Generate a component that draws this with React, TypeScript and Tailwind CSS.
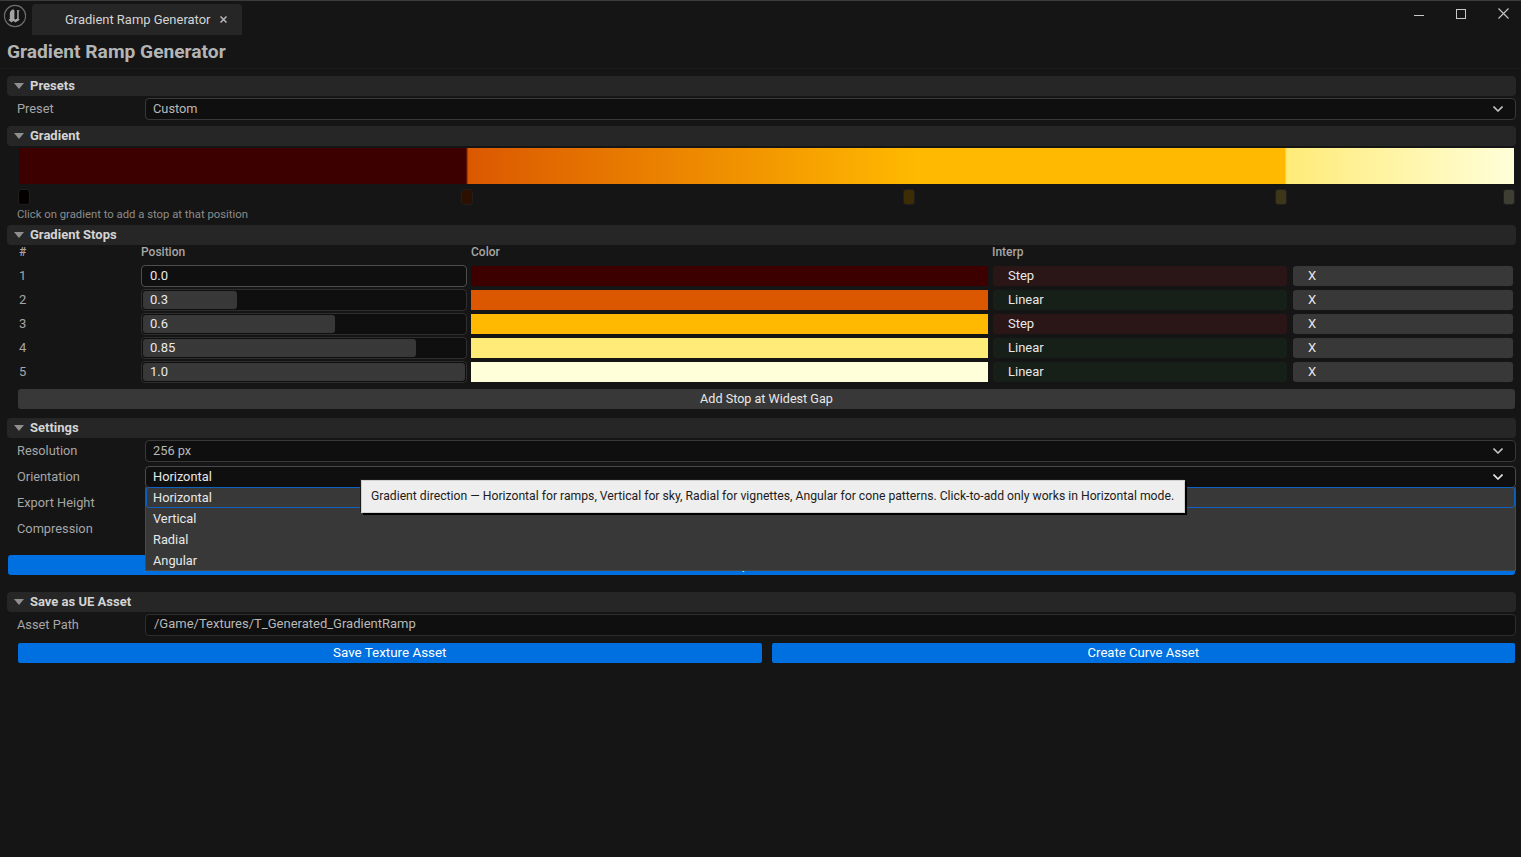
const stops = [
  { n: "1", pos: "0.0", fill: 0, color: "bg-[#3d0000]", interp: "Step" },
  { n: "2", pos: "0.3", fill: 0.292, color: "bg-[#db5800]", interp: "Linear" },
  { n: "3", pos: "0.6", fill: 0.596, color: "bg-[#ffb900]", interp: "Step" },
  { n: "4", pos: "0.85", fill: 0.848, color: "bg-[#ffeb78]", interp: "Linear" },
  { n: "5", pos: "1.0", fill: 1, color: "bg-[#ffffd9]", interp: "Linear" },
];

function Section({ title }: { title: string }) {
  return (
    <div className="ml-[7px] mr-[5px] flex h-5 items-center rounded-[4px] bg-[#262626] pl-[7px]">
      <svg width="10" height="6" viewBox="0 0 10 6" className="mr-[6px]">
        <polygon points="0,0 10,0 5,6" fill="#8f8f8f" />
      </svg>
      <span className="text-[13px] font-bold text-[#d4d4d4]">{title}</span>
    </div>
  );
}

function Chevron({ color = "#c0c0c0" }: { color?: string }) {
  return (
    <svg width="10" height="6" viewBox="0 0 10 6" fill="none" stroke={color} strokeWidth="1.6">
      <polyline points="0.5,0.5 5,5 9.5,0.5" />
    </svg>
  );
}

function SelectRow({ label, value, active }: { label: string; value?: string; active?: boolean }) {
  return (
    <div className="flex h-[22px] items-center pl-[17px] pr-[5px]">
      <span className="w-[128px] shrink-0 text-[12.8px] text-[#a6a6a6]">{label}</span>
      <div
        className={`flex h-[22px] flex-1 items-center justify-between rounded-[4px] border bg-[#0f0f0f] pl-[7px] pr-[12px] ${
          active ? "border-[#4a4a4a]" : "border-[#383838]"
        }`}
      >
        <span className={`text-[12.8px] ${active ? "text-[#e8e8e8]" : "text-[#b8b8b8]"}`}>{value}</span>
        <Chevron color={active ? "#e8e8e8" : "#c0c0c0"} />
      </div>
    </div>
  );
}

function StopRow({ stop }: { stop: (typeof stops)[number] }) {
  const step = stop.interp === "Step";
  return (
    <div className="flex h-[22px] items-center pl-[19px] pr-2">
      <span className="w-[122px] shrink-0 text-[13px] text-[#a6a6a6]">{stop.n}</span>
      <div
        className={`relative flex h-[22px] w-[326px] shrink-0 items-center rounded-[4px] border bg-[#0f0f0f] ${
          stop.n === "1" ? "border-[#4d4d4d]" : "border-[#2e2e2e]"
        }`}
      >
        <div
          className="absolute bottom-px left-px top-px rounded-[3px] bg-[#383838]"
          style={{ width: `${stop.fill * 322}px` }}
        />
        <span className="relative pl-2 text-[13px] text-[#e8e8e8]">{stop.pos}</span>
      </div>
      <div className={`ml-1 h-5 w-[517px] shrink-0 ${stop.color}`} />
      <div
        className={`ml-[5px] flex h-5 w-[294px] shrink-0 items-center rounded-[3px] pl-[15px] text-[13px] text-[#e8e8e8] ${
          step ? "bg-[#2a1616]" : "bg-[#161f18]"
        }`}
      >
        {stop.interp}
      </div>
      <div className="ml-[6px] flex h-5 w-[220px] shrink-0 items-center rounded-[3px] bg-[#383838] pl-[15px] text-[13px] text-[#e8e8e8]">
        X
      </div>
    </div>
  );
}

const handles = [
  { left: "ml-[18px]", color: "bg-[#050000]" },
  { left: "ml-[431px]", color: "bg-[#2d0f00]" },
  { left: "ml-[430px]", color: "bg-[#3d2d05]" },
  { left: "ml-[360px]", color: "bg-[#3e3618]" },
  { left: "ml-[216px]", color: "bg-[#3e3e32]" },
];

export default function App() {
  return (
    <div className="relative h-[857px] w-full overflow-hidden bg-[#151515] [font-family:Roboto,sans-serif]">
      {/* title bar */}
      <div className="h-px bg-[#3c3c3c]" />
      <div className="flex h-[35px] items-start">
        <svg width="24" height="24" viewBox="0 0 24 24" className="ml-[3px] mt-[3px]">
          <circle cx="12" cy="12" r="10.6" fill="#141414" stroke="#6e6e6e" strokeWidth="1.1" />
          <path
            d="M10.8 4.8C8.4 5.8 6.8 7.6 6.8 9.6v5.2l-1.5 1.5 1.4.5 1.5 1.6 2.4-1.4 1.8 1.6 4.4-2.9-1.1-.6V7.4l1.1-.8c-1.1-.6-2.1-.8-3.2-.7l.6.9v7.6l-1.9 1.2-.9-.7V6.2l-1-.4-.3-1z"
            fill="#a3a3a3"
          />
        </svg>
        <div className="ml-[5px] mt-[3px] flex h-[31px] w-[210px] items-center rounded-t-[4px] bg-[#262626] pl-[33px]">
          <span className="text-[12.95px] text-[#d4d4d4]">Gradient Ramp Generator</span>
          <svg width="7" height="7" viewBox="0 0 7 7" className="ml-[10px]" stroke="#b8b8b8" strokeWidth="1.5">
            <path d="M.5.5l6 6M6.5.5l-6 6" />
          </svg>
        </div>
        <div className="ml-auto mr-[12px] mt-[7px] flex items-center">
          <svg width="10" height="10" viewBox="0 0 10 10" stroke="#c8c8c8" strokeWidth="1">
            <path d="M0 6.5h10" />
          </svg>
          <svg width="10" height="10" viewBox="0 0 10 10" fill="none" stroke="#c8c8c8" strokeWidth="1" className="ml-[32px]">
            <rect x=".5" y=".5" width="9" height="9" />
          </svg>
          <svg width="11" height="11" viewBox="0 0 11 11" stroke="#c8c8c8" strokeWidth="1.1" className="ml-[32px]">
            <path d="M.5.5l10 10M10.5.5l-10 10" />
          </svg>
        </div>
      </div>

      <div className="flex h-[33px] items-center border-b border-[#1b1b1b] pt-[1px] pl-[7px] text-[19.2px] font-bold text-[#b4b4b4]">
        Gradient Ramp Generator
      </div>

      <div className="mt-[7px]">
        <Section title="Presets" />
        <div className="mt-[2px]">
          <SelectRow label="Preset" value="Custom" />
        </div>

        <div className="mt-[6px]">
          <Section title="Gradient" />
        </div>
        <div className="ml-[19px] mr-[7px] mt-[2px] h-9 bg-[linear-gradient(90deg,#3d0000_0%,#3d0000_29.9%,#db5800_30.05%,#ffb900_60%,#ffb900_84.65%,#ffeb78_84.8%,#ffffd9_100%)]" />
        <div className="mt-[5px] flex h-4">
          {handles.map((h) => (
            <div key={h.left} className={`h-4 w-3 rounded-[3px] border border-[#1f1f1f] ${h.left} ${h.color}`} />
          ))}
        </div>
        <div className="mt-[2px] h-4 pl-[17px] text-[11.3px] leading-4 text-[#8c8c8c]">
          Click on gradient to add a stop at that position
        </div>

        <div className="mt-[2px]">
          <Section title="Gradient Stops" />
        </div>
        <div className="flex h-5 items-start pl-[19px] text-xs font-medium leading-[14px] text-[#a6a6a6]">
          <span className="w-[122px]">#</span>
          <span className="w-[330px]">Position</span>
          <span className="w-[521px]">Color</span>
          <span>Interp</span>
        </div>
        <div className="flex flex-col gap-[2px]">
          {stops.map((stop) => (
            <StopRow key={stop.n} stop={stop} />
          ))}
        </div>
        <div className="ml-[18px] mr-[6px] mt-[6px] flex h-5 items-center justify-center rounded-[3px] bg-[#383838] text-[12.6px] text-[#e8e8e8]">
          Add Stop at Widest Gap
        </div>

        <div className="mt-[9px]">
          <Section title="Settings" />
        </div>
        <div className="mt-[2px] flex flex-col gap-1">
          <SelectRow label="Resolution" value="256 px" />
          <SelectRow label="Orientation" value="Horizontal" active />
          <SelectRow label="Export Height" />
          <SelectRow label="Compression" />
        </div>
        <div className="ml-2 mr-[6px] mt-[15px] flex h-5 items-center justify-center rounded-[3px] bg-[#0070e0] text-[13px] text-white">
          Export PNG
        </div>

        <div className="mt-[17px]">
          <Section title="Save as UE Asset" />
        </div>
        <div className="mt-[2px] flex h-[22px] items-center pl-[17px] pr-[5px]">
          <span className="w-[128px] shrink-0 text-[12.8px] text-[#a6a6a6]">Asset Path</span>
          <div className="flex h-[22px] flex-1 items-center rounded-[4px] border border-[#2e2e2e] bg-[#0f0f0f] pb-[2px] pl-2 text-[13px] text-[#b8b8b8]">
            /Game/Textures/T_Generated_GradientRamp
          </div>
        </div>
        <div className="ml-[18px] mr-[6px] mt-[7px] flex gap-[10px]">
          <div className="flex h-5 flex-1 items-center justify-center rounded-[2px] bg-[#0070e0] text-[13.4px] text-white">
            Save Texture Asset
          </div>
          <div className="flex h-5 flex-1 items-center justify-center rounded-[2px] bg-[#0070e0] text-[13.1px] text-white">
            Create Curve Asset
          </div>
        </div>
      </div>

      {/* open dropdown */}
      <div className="absolute left-[145px] right-[5px] top-[487px] h-[84px] border-x border-b border-[#4a4a4a] bg-[#383838] text-[12.8px] text-[#e8e8e8]">
        <div className="flex h-[21px] items-center rounded-[3px] border border-[#0f62c0] pl-[6px]">Horizontal</div>
        <div className="flex h-[21px] items-center pl-[7px]">Vertical</div>
        <div className="flex h-[21px] items-center pl-[7px]">Radial</div>
        <div className="flex h-[21px] items-center pl-[7px]">Angular</div>
      </div>

      {/* tooltip */}
      <div className="absolute left-[361px] top-[480px] flex h-[33px] w-[824px] items-center border border-[#d0d0d0] bg-[#eeeeee] pb-[1px] pl-[9px] text-[12.2px] text-[#1c1c1c] shadow-[2px_2px_0_#000,-1px_-1px_0_#1a1a1a]">
        Gradient direction — Horizontal for ramps, Vertical for sky, Radial for vignettes, Angular for cone patterns. Click-to-add only works in Horizontal mode.
      </div>
    </div>
  );
}
